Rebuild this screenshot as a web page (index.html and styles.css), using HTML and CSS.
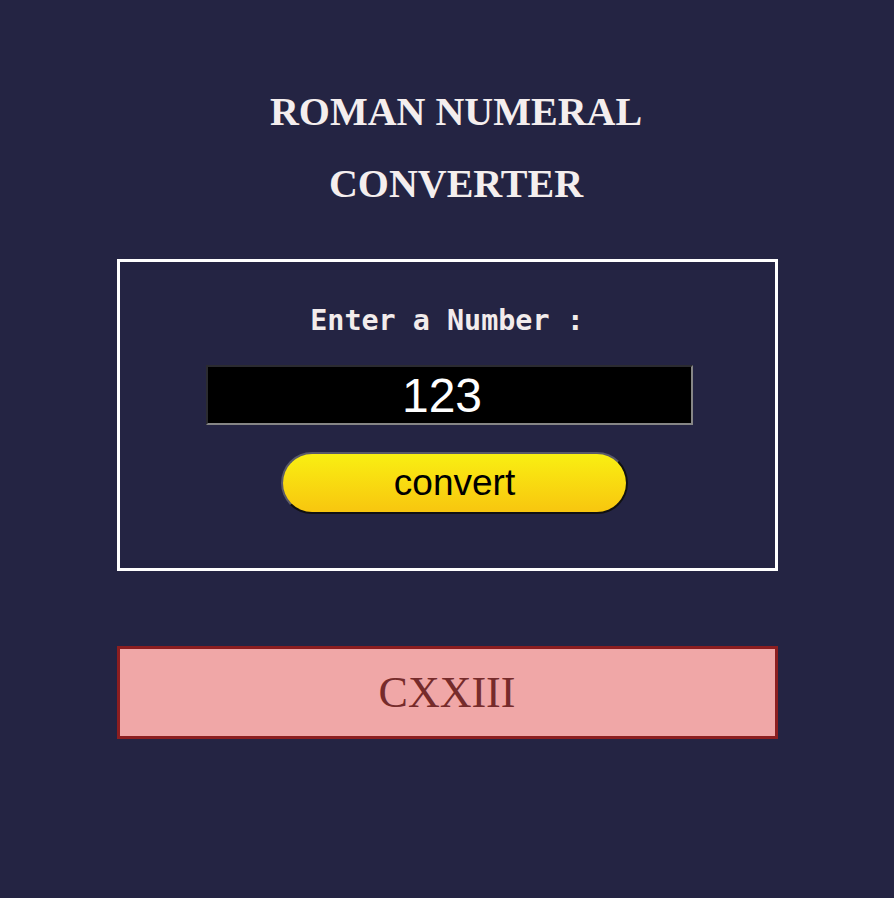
FILE: index.html
```html
<!DOCTYPE html>
<html lang="en">
<head>
<meta charset="utf-8">
<title>Roman Numeral Converter</title>
<link rel="stylesheet" href="styles.css">
</head>
<body>
<main class="page">
  <h1 class="title">ROMAN NUMERAL CONVERTER</h1>
  <form class="card">
    <label class="label" for="number">Enter a Number :</label>
    <input class="number-input" id="number" type="number" value="123">
    <button class="convert-btn" type="button">convert</button>
  </form>
  <div class="output">CXXIII</div>
</main>
</body>
</html>
```

FILE: styles.css
```css
* {
  box-sizing: border-box;
}

html, body {
  margin: 0;
  padding: 0;
  background: #242443;
  min-height: 100%;
}

.page {
  width: 661px;
  margin: 0 auto;
  padding-top: 76px;
  display: flex;
  flex-direction: column;
  align-items: center;
}

.title {
  margin: 0;
  max-width: 440px;
  padding-left: 18px;
  font-family: "Liberation Serif", "Times New Roman", serif;
  font-weight: bold;
  font-size: 40px;
  line-height: 72px;
  text-align: center;
  color: #f4eeee;
}

.card {
  margin-top: 39px;
  width: 661px;
  height: 312px;
  border: 3px solid #ffffff;
  padding-top: 42px;
  display: flex;
  flex-direction: column;
  align-items: center;
}

.label {
  font-family: "DejaVu Sans Mono", monospace;
  font-weight: bold;
  font-size: 28.4px;
  color: #f2ecec;
}

.number-input {
  margin-top: 28px;
  margin-left: 5px;
  width: 487px;
  height: 60px;
  background: #000000;
  color: #ffffff;
  border-width: 2px;
  border-style: solid;
  border-color: #2b2b30 #868686 #868686 #2b2b30;
  font-family: "Liberation Sans", Arial, sans-serif;
  font-size: 48px;
  text-align: center;
  padding: 0 2px;
  outline: none;
}

.convert-btn {
  margin-top: 27px;
  margin-left: 15px;
  width: 347px;
  height: 62px;
  border-radius: 31px;
  border: 2px solid;
  border-color: #5a5a68 #111111 #111111 #5a5a68;
  background: linear-gradient(to bottom, #f9ef12, #f8c60f);
  font-family: "Liberation Sans", Arial, sans-serif;
  font-size: 37px;
  color: #000000;
  padding: 0;
  cursor: pointer;
}

.output {
  margin-top: 75px;
  width: 661px;
  height: 93px;
  border: 3px solid #8c1e20;
  background: #f0a7a7;
  color: #762b2b;
  font-family: "Liberation Serif", "Times New Roman", serif;
  font-size: 44px;
  display: flex;
  align-items: center;
  justify-content: center;
}
```
